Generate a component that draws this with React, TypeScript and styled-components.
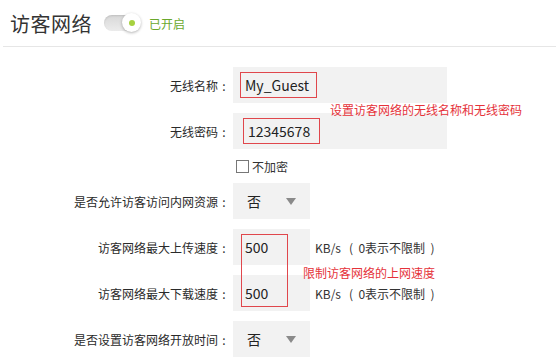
import { FunctionComponent } from "react";
import styled, { createGlobalStyle } from "styled-components";

const GlobalStyle = createGlobalStyle`
  body {
    margin: 0;
    background: #fff;
    font-family: "Noto Sans CJK SC", "Liberation Sans", sans-serif;
    color: #333;
  }
`;

const Header = styled.div`
  display: flex;
  align-items: center;
  height: 46px;
  padding-left: 10px;
  margin-left: 3px;
  border-bottom: 1px solid #e6e6e6;
`;

const Title = styled.h1`
  margin: 0 0 0 -3px;
  font-size: 20px;
  font-weight: 400;
  color: #333;
  letter-spacing: 0.5px;
`;

const Toggle = styled.div`
  position: relative;
  width: 35px;
  height: 16px;
  margin-left: 12px;
  border-radius: 9px;
  background: linear-gradient(#d8d8d8, #ececec);
  box-shadow: inset 0 1px 2px rgba(0, 0, 0, 0.12);
`;

const Knob = styled.div`
  position: absolute;
  right: -2px;
  top: -2px;
  width: 19px;
  height: 19px;
  border-radius: 50%;
  background: #fff;
  box-shadow: 0 1px 3px rgba(0, 0, 0, 0.3);
  display: flex;
  align-items: center;
  justify-content: center;
  &::after {
    content: "";
    width: 6px;
    height: 6px;
    border-radius: 50%;
    background: #a6d13f;
  }
`;

const Status = styled.span`
  margin-left: 10px;
  font-size: 12px;
  color: #6aa82c;
`;

const Form = styled.div`
  position: relative;
  display: grid;
  grid-template-columns: 230px auto;
  column-gap: 3px;
  row-gap: 10px;
  align-items: center;
  margin-top: 20px;
`;

const Label = styled.div`
  text-align: right;
  font-size: 12px;
  color: #2a2a2a;
  white-space: nowrap;
`;

const Colon = styled.span`
  display: inline-block;
  width: 12px;
  text-align: center;
`;

const Field = styled.div`
  display: flex;
  align-items: center;
`;

const Box = styled.div<{ w: number }>`
  width: ${(p) => p.w}px;
  height: 36px;
  background: #f2f2f2;
  display: flex;
  align-items: center;
  box-sizing: border-box;
`;

const TextValue = styled.div<{ outlined?: boolean; inset: number }>`
  margin-left: ${(p) => p.inset}px;
  width: 77px;
  height: 26px;
  box-sizing: border-box;
  border: ${(p) => (p.outlined ? "1px solid #e0474c" : "none")};
  padding-left: 4px;
  display: flex;
  align-items: center;
  font-size: 14px;
  color: #222;
`;

const SelectValue = styled.div`
  display: flex;
  align-items: center;
  justify-content: space-between;
  width: 100%;
  padding: 0 14px;
  font-size: 14px;
  color: #222;
`;

const Arrow = styled.span`
  width: 0;
  height: 0;
  border-left: 5px solid transparent;
  border-right: 5px solid transparent;
  border-top: 7px solid #8a8a8a;
`;

const Check = styled.label`
  display: flex;
  align-items: center;
  gap: 3px;
  height: 14px;
  padding-left: 3px;
  font-size: 12px;
  color: #333;
`;

const CheckSquare = styled.span`
  width: 11px;
  height: 11px;
  border: 1px solid #777;
  background: #fff;
`;

const Unit = styled.span`
  margin-left: 5px;
  font-size: 12px;
  color: #333;
  white-space: pre;
`;

const Note = styled.div<{ x: number; y: number }>`
  position: absolute;
  left: ${(p) => p.x}px;
  top: ${(p) => p.y}px;
  font-size: 12px;
  color: #e5323a;
  white-space: nowrap;
`;

const SpeedFrame = styled.div`
  position: absolute;
  left: 241px;
  top: 167px;
  width: 47px;
  height: 73px;
  box-sizing: border-box;
  border: 1px solid #e0474c;
`;

const FieldLabel: FunctionComponent<{ text: string }> = ({ text }) => (
  <Label>
    {text}
    <Colon>:</Colon>
  </Label>
);

const Select: FunctionComponent<{ value: string }> = ({ value }) => (
  <Box w={77}>
    <SelectValue>
      {value}
      <Arrow />
    </SelectValue>
  </Box>
);

const Speed: FunctionComponent<{ value: string }> = ({ value }) => (
  <Field>
    <Box w={77}>
      <TextValue inset={8}>{value}</TextValue>
    </Box>
    <Unit>KB/s   (  0表示不限制  )</Unit>
  </Field>
);

const App = () => {
  return (
    <>
      <GlobalStyle />
      <Header>
        <Title>访客网络</Title>
        <Toggle>
          <Knob />
        </Toggle>
        <Status>已开启</Status>
      </Header>
      <Form>
        <FieldLabel text="无线名称" />
        <Box w={214}>
          <TextValue outlined inset={7}>My_Guest</TextValue>
        </Box>

        <FieldLabel text="无线密码" />
        <Box w={214}>
          <TextValue outlined inset={10}>12345678</TextValue>
        </Box>

        <div />
        <Check>
          <CheckSquare />
          不加密
        </Check>

        <FieldLabel text="是否允许访客访问内网资源" />
        <Select value="否" />

        <FieldLabel text="访客网络最大上传速度" />
        <Speed value="500" />

        <FieldLabel text="访客网络最大下载速度" />
        <Speed value="500" />

        <FieldLabel text="是否设置访客网络开放时间" />
        <Select value="否" />

        <Note x={330} y={34}>设置访客网络的无线名称和无线密码</Note>
        <Note x={303} y={197}>限制访客网络的上网速度</Note>
        <SpeedFrame />
      </Form>
    </>
  );
};

export default App;
